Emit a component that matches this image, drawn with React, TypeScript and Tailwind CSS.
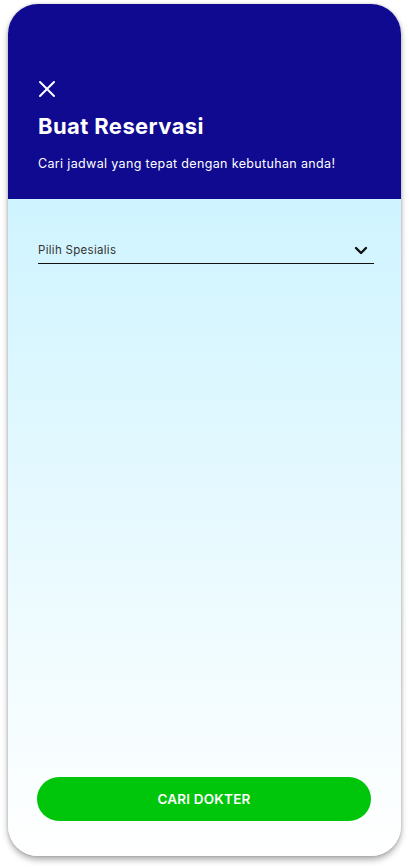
import * as React from "react";

function CloseIcon() {
    return (
        <svg width="18" height="18" viewBox="0 0 18 18" fill="none">
            <path d="M2 2L16 16M16 2L2 16" stroke="white" strokeWidth="2" strokeLinecap="round"/>
        </svg>
    );
}

function ChevronDown() {
    return (
        <svg width="14" height="9" viewBox="0 0 14 9" fill="none">
            <path d="M2 2L7 7L12 2" stroke="#111" strokeWidth="2.4" strokeLinecap="round" strokeLinejoin="round"/>
        </svg>
    );
}

export default function App() {
    return (
        <div className="w-[409px] h-[868px] bg-white pt-[4px] pl-[8px]" style={{fontFamily: "Inter, 'Noto Sans', sans-serif"}}>
            <div
                className="w-[393px] h-[852px] rounded-[30px] overflow-hidden flex flex-col shadow-[0_4px_6px_rgba(0,0,0,0.3),0_0_3px_rgba(0,0,0,0.2)]"
            >
                <header className="bg-[#0f0a8f] h-[195px] px-[30px] pt-[76px] flex flex-col shrink-0">
                    <CloseIcon/>
                    <h1 className="mt-[14px] text-white text-[22px] font-bold tracking-[0.4px] leading-[28px]">
                        Buat Reservasi
                    </h1>
                    <p className="mt-[16px] text-white text-[12.5px] tracking-[0.35px] leading-[16px]">
                        Cari jadwal yang tepat dengan kebutuhan anda!
                    </p>
                </header>

                <main className="flex-1 flex flex-col pl-[30px] pr-[27px] pt-[43px] pb-[35px] bg-gradient-to-b from-[#cff4ff] to-[#ffffff]">
                    <div className="flex items-center justify-between border-b border-[#111] pb-[5px] pr-[6px]">
                        <span className="text-[11.5px] tracking-[0.3px] text-[#333] leading-[16px]">Pilih Spesialis</span>
                        <ChevronDown/>
                    </div>

                    <div className="flex-1"/>

                    <button className="h-[44px] w-[334px] -ml-[1px] rounded-full bg-[#00c60b] text-white text-[13.5px] font-semibold tracking-[0.2px]">
                        CARI DOKTER
                    </button>
                </main>
            </div>
        </div>
    );
}
